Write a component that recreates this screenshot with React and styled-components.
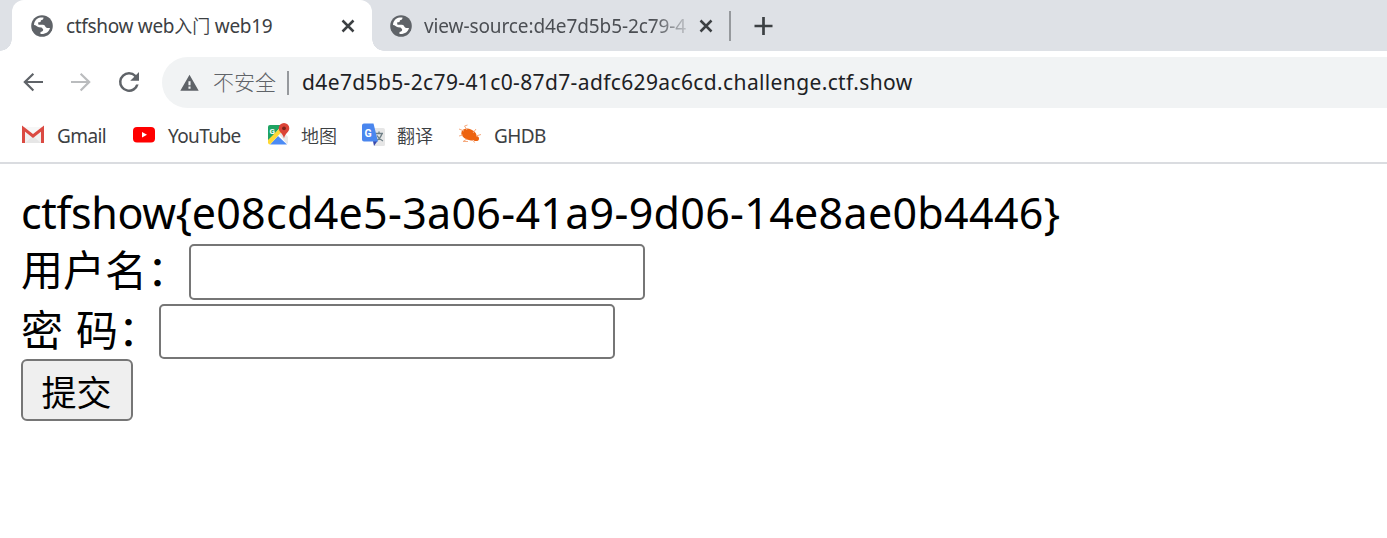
import React from "react";
import styled, { createGlobalStyle } from "styled-components";

const Global = createGlobalStyle`
  * { box-sizing: border-box; }
  body { margin: 0; background: #fff; overflow: hidden;
    font-family: "Noto Sans", "Noto Sans CJK SC", sans-serif; }
  svg { display: block; flex: none; }
`;

const Browser = styled.div`
  height: 538px;
  overflow: hidden;
  background: #fff;
`;

const TabStrip = styled.div`
  display: flex;
  height: 51px;
  padding-left: 12px;
  background: #dee1e6;
`;

const Tab = styled.div`
  position: relative;
  display: flex;
  align-items: center;
  height: 51px;
  width: ${(p) => (p.$active ? 360 : 357)}px;
  padding-left: ${(p) => (p.$active ? 19 : 18)}px;
  background: ${(p) => (p.$active ? "#fff" : "transparent")};
  border-radius: 12px 12px 0 0;
  ${(p) =>
    p.$active &&
    `&::before, &::after {
      content: ""; position: absolute; bottom: 0; width: 12px; height: 12px;
    }
    &::before { left: -12px; background: radial-gradient(circle at 0 0, transparent 11.5px, #fff 12px); }
    &::after { right: -12px; background: radial-gradient(circle at 100% 0, transparent 11.5px, #fff 12px); }`}
`;

const TabTitle = styled.span`
  width: ${(p) => (p.$fade ? 264 : 274)}px;
  margin-left: ${(p) => (p.$fade ? 12 : 13)}px;
  margin-right: ${(p) => (p.$fade ? 11 : 1)}px;
  overflow: hidden;
  white-space: nowrap;
  font-size: 19px;
  line-height: 28px;
  color: ${(p) => (p.$fade ? "#4b4e53" : "#3c4043")};
  letter-spacing: ${(p) => p.$track || 0}px;
  ${(p) => p.$fade && "mask-image: linear-gradient(90deg, #000 228px, transparent 272px);"}
`;

const Han = styled.span`
  font-family: "Noto Sans CJK SC", sans-serif;
  font-size: 18px;
  font-weight: 350;
  letter-spacing: 0;
`;

const Divider = styled.div`
  width: 2px;
  height: ${(p) => p.$h}px;
  flex: none;
  align-self: center;
  background: #96999d;
`;

const NewTab = styled.div`
  display: flex;
  align-items: center;
  margin-left: 22px;
`;

const Toolbar = styled.div`
  display: flex;
  align-items: center;
  height: 63px;
  padding-left: 18px;
`;

const NavButtons = styled.div`
  display: flex;
  align-items: center;
  gap: 18px;
  width: 144px;
  padding-bottom: 1px;
`;

const AddressBar = styled.div`
  display: flex;
  align-items: center;
  flex: 1;
  height: 51px;
  padding-left: 17px;
  background: #f1f3f4;
  border-radius: 26px 0 0 26px;
`;

const Security = styled.span`
  width: 74px;
  margin: 0 0 2px 13px;
  font-size: 21px;
  line-height: 30px;
  font-weight: 300;
  color: #5f6368;
`;

const Url = styled.span`
  margin: 0 0 2px 13px;
  font-size: 21px;
  line-height: 30px;
  letter-spacing: 0.37px;
  color: #202124;
  white-space: nowrap;
`;

const Bookmarks = styled.div`
  display: flex;
  height: 50px;
  padding: 9px 0 0 20px;
  border-bottom: 2px solid #dadce0;
`;

const Bookmark = styled.div`
  display: flex;
  align-items: center;
  gap: 11px;
  height: 26px;
  width: ${(p) => p.$w}px;
  font-size: 19px;
  letter-spacing: -0.6px;
  color: #3c4043;
  white-space: nowrap;
  ${Han} { margin: 0 0 2px -1px; }
`;

const Page = styled.main`
  padding: 21px 21px 0;
  color: #000;
`;

const Flag = styled.div`
  height: 59px;
  font-size: 43px;
  line-height: 56px;
  letter-spacing: 0.3px;
  white-space: nowrap;
`;

const FlagName = styled.span`
  letter-spacing: -0.35px;
`;

const Field = styled.label`
  display: flex;
  align-items: flex-start;
  height: ${(p) => p.$h}px;
  font-size: 42px;
  line-height: 51px;
  white-space: pre;
`;

const Label = styled.span`
  flex: none;
  width: ${(p) => p.$w}px;
  word-spacing: 2px;
`;

const Input = styled.input`
  width: 456px;
  height: ${(p) => p.$h}px;
  border: 2px solid #767676;
  border-radius: 5px;
  background: #fff;
  outline: none;
`;

const Submit = styled.button`
  display: block;
  width: 112px;
  height: 62px;
  padding: 1px 1px 0 0;
  border: 2px solid #767676;
  border-radius: 6px;
  background: #efefef;
  color: #000;
  font: 35px/50px "Noto Sans CJK SC", sans-serif;
`;

const Globe = () => (
  <svg width="22" height="22" viewBox="0 0 22 22">
    <circle cx="11" cy="11" r="10.800" fill="#5f6368" />
    <path fill="#fff" d="M3 10C3.200 6 6 3 9.500 2.600H12.500C12.500 4.500 11.500 5 10 5.200L9.500 7 7 7.500 7.500 9.800H12C14.500 10 14.200 13 16.300 13H19C18 17 14.500 19.400 9.500 19V17C12 16.500 12.500 15.200 12 14L10.500 12.500 8 12.300C6 12 5 10 3 10Z" />
  </svg>
);

const Close = () => (
  <svg width="14" height="14" viewBox="0 0 14 14">
    <path d="M1.500 1.500l11 11m0-11l-11 11" stroke="#3c4043" strokeWidth="2.500" />
  </svg>
);

const Plus = () => (
  <svg width="20" height="20" viewBox="0 0 20 20">
    <path d="M10.500 1v18M1.500 10h18" stroke="#3c4043" strokeWidth="2.700" />
  </svg>
);

const NavIcon = ({ d, color = "#5f6368" }) => (
  <svg width="30" height="30" viewBox="0 0 24 24"><path d={d} fill={color} /></svg>
);

const BACK = "M20 11.200H7.600l5.300-5.300L11.700 4.700 4.200 12l7.500 7.300 1.200-1.200L7.600 12.800H20z";
const FORWARD = "M4 11.200h12.400l-5.300-5.300L12.300 4.700 19.800 12l-7.500 7.300-1.200-1.200 5.300-5.300H4z";
const RELOAD = "M17.650 6.350A7.960 7.960 0 0 0 12 4a8 8 0 1 0 7.730 10h-2.080A6 6 0 1 1 12 6c1.660 0 3.140.690 4.220 1.780L13 11h7V4z";

const Warning = () => (
  <svg width="21" height="21" viewBox="0 0 24 24">
    <path fill="#5f6368" d="M1.500 21.500h21L12 3zM13.200 19h-2.400v-2.300h2.400zm0-4h-2.400v-4.300h2.400z" />
  </svg>
);

const GmailIcon = () => (
  <svg width="26" height="26" viewBox="0 0 26 26">
    <path fill="#f1f1f1" d="M3 4h20v16H3z" />
    <path fill="#e6e6e6" d="M5 20l8-7 8 7z" />
    <path fill="#f7f7f7" d="M4 4h18l-9 7z" />
    <path fill="none" stroke="#db4a42" strokeWidth="3" d="M3.500 20V5.500L13 13l9.500-7.500V20" />
  </svg>
);

const YouTubeIcon = () => (
  <svg width="26" height="26" viewBox="0 0 26 26">
    <rect x="2" y="4" width="22" height="15.500" rx="4" fill="#f00" />
    <path fill="#fff" d="M11 9v5.500l5-2.750z" />
  </svg>
);

const MapsIcon = () => (
  <svg width="26" height="26" viewBox="0 0 26 26">
    <path fill="#1fa463" d="M5 2h12L3 19V4a2 2 0 0 1 2-2z" />
    <path fill="#e8e8e8" d="M14 11l4-3 5 6v6l-1 1z" />
    <path fill="#4c8bf5" d="M5 21.500l8-8.500 9 8.500z" />
    <path fill="#fdd835" d="M3 17L14 6l2.500 3L5 21.500q-2 0-2-2z" />
    <text x="4.500" y="10.500" fontSize="8" fontWeight="700" fontFamily="Roboto, sans-serif" fill="#fff">G</text>
    <path fill="#db4437" d="M19 0a5.300 5.300 0 0 0-5.300 5.300c0 3.700 4 5 5.300 10 1.300-5 5.300-6.300 5.300-10A5.300 5.300 0 0 0 19 0z" />
    <circle cx="19" cy="5.300" r="1.900" fill="#7b231b" />
  </svg>
);

const TranslateIcon = () => (
  <svg width="26" height="26" viewBox="0 0 26 26">
    <path fill="#e6e6e6" d="M10 5h12a2 2 0 0 1 2 2v14.500a1.500 1.500 0 0 1-1.500 1.500H13z" />
    <path fill="none" stroke="#6f7f86" strokeWidth="1.300" d="M14.500 10.500H22M18 8.500v2M21 10.500q-1.500 5-5.500 7M16 12.500q2 4 6 5.500" />
    <path fill="#3949ab" d="M12 18h4.500L13 23z" />
    <path fill="#4a86ee" d="M3 0.500h9.500L17 18.500H3a2 2 0 0 1-2-2V2.500a2 2 0 0 1 2-2z" />
    <text x="3.500" y="13.500" fontSize="10.500" fontWeight="700" fontFamily="Roboto, sans-serif" fill="#fff">G</text>
  </svg>
);

const BugIcon = () => (
  <svg width="26" height="26" viewBox="0 0 26 26">
    <g fill="#ed6310">
      <ellipse cx="12" cy="11.500" rx="8" ry="5.500" transform="rotate(22 12 11.500)" />
      <ellipse cx="19" cy="15.500" rx="3" ry="2.600" />
    </g>
    <path fill="none" stroke="#f6ab80" strokeWidth="1" d="M7 8L2 6M10 7L7.500 3l3-1M16 10l3-4M19 13l5-1.500M6 12l-4 1M10 16l-4 2.500h5M15 17l3 2.500" />
  </svg>
);

export default function App() {
  return (
    <Browser>
      <Global />
      <TabStrip>
        <Tab $active>
          <Globe />
          <TabTitle $track={-0.32}>ctfshow web<Han>入门</Han> web19</TabTitle>
          <Close />
        </Tab>
        <Tab>
          <Globe />
          <TabTitle $fade $track={-0.1}>view-source:d4e7d5b5-2c79-4</TabTitle>
          <Close />
        </Tab>
        <Divider $h={30} />
        <NewTab><Plus /></NewTab>
      </TabStrip>
      <Toolbar>
        <NavButtons>
          <NavIcon d={BACK} />
          <NavIcon d={FORWARD} color="#babcbe" />
          <NavIcon d={RELOAD} />
        </NavButtons>
        <AddressBar>
          <Warning />
          <Security>不安全</Security>
          <Divider $h={24} />
          <Url>d4e7d5b5-2c79-41c0-87d7-adfc629ac6cd.challenge.ctf.show</Url>
        </AddressBar>
      </Toolbar>
      <Bookmarks>
        <Bookmark $w={111}><GmailIcon /><span>Gmail</span></Bookmark>
        <Bookmark $w={134}><YouTubeIcon /><span>YouTube</span></Bookmark>
        <Bookmark $w={96}><MapsIcon /><Han>地图</Han></Bookmark>
        <Bookmark $w={96}><TranslateIcon /><Han>翻译</Han></Bookmark>
        <Bookmark $w={110}><BugIcon /><span>GHDB</span></Bookmark>
      </Bookmarks>
      <Page>
        <Flag><FlagName>{"ctfshow{"}</FlagName>{"e08cd4e5-3a06-41a9-9d06-14e8ae0b4446}"}</Flag>
        <Field $h={60}><Label $w={168}>用户名：</Label><Input $h={56} /></Field>
        <Field $h={55}><Label $w={138}>密 码：</Label><Input $h={55} /></Field>
        <Submit>提交</Submit>
      </Page>
    </Browser>
  );
}
